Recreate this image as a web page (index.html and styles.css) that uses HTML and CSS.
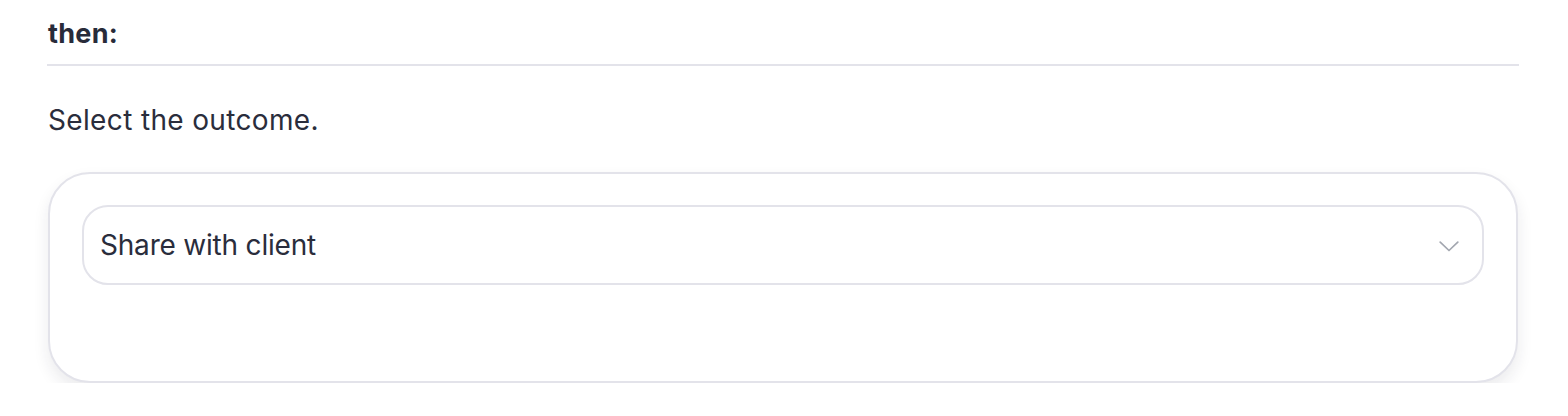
FILE: index.html
```html
<!DOCTYPE html>
<html lang="en">
<head>
<meta charset="utf-8">
<title>Rule outcome</title>
<link rel="stylesheet" href="styles.css">
</head>
<body>
<section class="step">
  <header class="step-header">
    <h2 class="step-title">then:</h2>
  </header>
  <p class="step-hint">Select the outcome.</p>
  <div class="card">
    <div class="select">
      <span class="select-value">Share with client</span>
      <svg class="chevron" width="20" height="11" viewBox="0 0 20 11" aria-hidden="true">
        <path d="M1.2 1.2 L10 9.5 L18.8 1.2" fill="none" stroke="#a3a7b0" stroke-width="1.7" stroke-linecap="round" stroke-linejoin="round"/>
      </svg>
    </div>
  </div>
</section>
</body>
</html>
```

FILE: styles.css
```css
* { box-sizing: border-box; }
html, body { margin: 0; padding: 0; background: #ffffff; }
body {
  font-family: Inter, "Noto Sans", sans-serif;
  color: #282b3a;
}
.step {
  padding: 0 49px 0 47px;
}
.step-header {
  height: 66px;
  border-bottom: 2px solid #e3e3ea;
  display: flex;
  align-items: flex-start;
  padding-top: 16px;
}
.step-title {
  margin: 0;
  font-size: 27px;
  font-weight: 700;
  line-height: 36px;
  letter-spacing: 0.3px;
  padding-left: 1px;
  color: #282b3a;
}
.step-hint {
  margin: 0;
  padding: 36px 0 0 1px;
  font-size: 28px;
  line-height: 36px;
  letter-spacing: 0.35px;
  color: #2a2d3c;
}
.card {
  margin: 34px 1px 0 1px;
  height: 211px;
  border: 2px solid #e3e3ea;
  border-radius: 42px;
  background: #fff;
  box-shadow: 0 8px 16px rgba(30, 35, 60, 0.09);
  padding: 31px 32px;
}
.select {
  height: 80px;
  border: 2px solid #e3e3ea;
  border-radius: 26px;
  display: flex;
  align-items: center;
  justify-content: space-between;
  padding: 0 23px 0 16px;
}
.select-value {
  font-size: 28px;
  letter-spacing: -0.2px;
  color: #2a2d3c;
}
.chevron { display: block; margin-top: 2px; }
```
